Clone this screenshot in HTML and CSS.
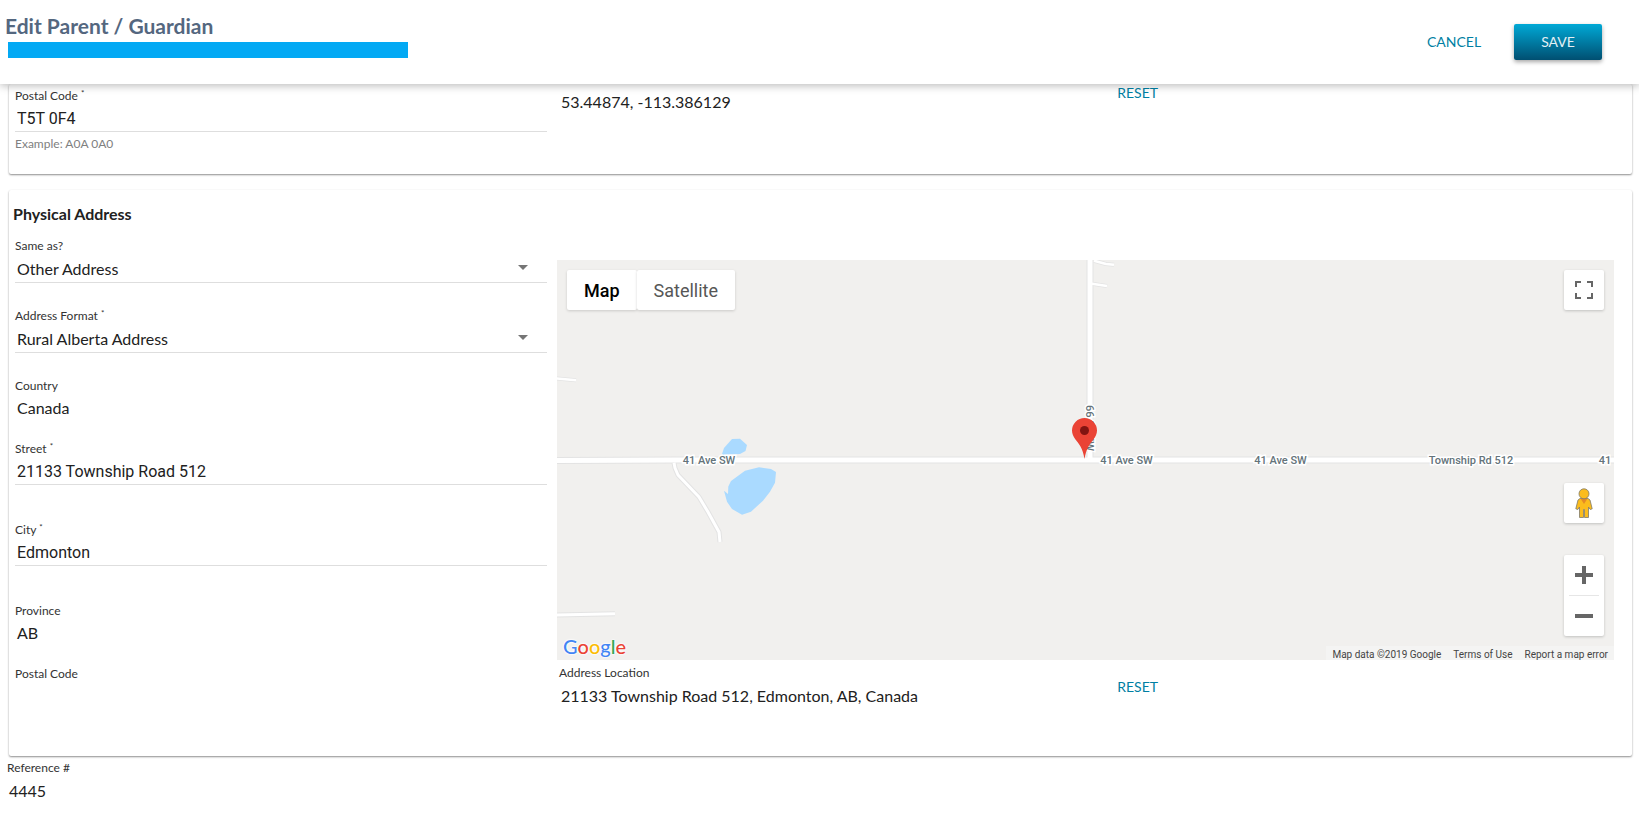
FILE: index.html
```html
<!DOCTYPE html>
<html lang="en">
<head>
<meta charset="utf-8">
<title>Edit Parent / Guardian</title>
<link rel="stylesheet" href="styles.css">
</head>
<body>
<header class="topbar">
  <div class="topbar-title">
    <h1>Edit Parent / Guardian</h1>
    <div class="name-bar"></div>
  </div>
  <div class="topbar-actions">
    <button class="btn" type="button">CANCEL</button>
    <button class="btn btn-primary" type="button">SAVE</button>
  </div>
</header>
<main>
  <section class="card card-mailing">
    <div class="columns">
      <div class="form-column">
        <div class="field">
          <label for="mail-postal">Postal Code <span class="req">*</span></label>
          <input id="mail-postal" type="text" value="T5T 0F4">
          <p class="hint">Example: A0A 0A0</p>
        </div>
      </div>
      <div class="location">
        <div class="location-text"><p class="value">53.44874, -113.386129</p></div>
        <button class="btn-link" type="button">RESET</button>
      </div>
    </div>
  </section>

  <section class="card card-physical">
    <h2>Physical Address</h2>
    <div class="columns">
      <div class="form-column">
        <div class="field field-select">
          <label for="same-as">Same as?</label>
          <div class="select">
            <select id="same-as"><option>Other Address</option></select>
            <svg class="caret" viewBox="0 0 10 5"><path d="M0 0h10L5 5z"/></svg>
          </div>
        </div>
        <div class="field field-select">
          <label for="format">Address Format <span class="req">*</span></label>
          <div class="select">
            <select id="format"><option>Rural Alberta Address</option></select>
            <svg class="caret" viewBox="0 0 10 5"><path d="M0 0h10L5 5z"/></svg>
          </div>
        </div>
        <div class="field field-static">
          <span class="label">Country</span>
          <p class="value">Canada</p>
        </div>
        <div class="field field-input">
          <label for="street">Street <span class="req">*</span></label>
          <input id="street" type="text" value="21133 Township Road 512">
        </div>
        <div class="field field-input">
          <label for="city">City <span class="req">*</span></label>
          <input id="city" type="text" value="Edmonton">
        </div>
        <div class="field field-static">
          <span class="label">Province</span>
          <p class="value">AB</p>
        </div>
        <div class="field field-static">
          <span class="label">Postal Code</span>
        </div>
      </div>

      <div class="map-column">
        <div class="map">
          <svg class="map-canvas" viewBox="0 0 1057 400" preserveAspectRatio="xMidYMid slice">
            <g class="road-edge">
              <path stroke-width="4" d="M-5 118l24 2.300M537 .7L549 4l8 .7M535 23.700l15 2.300"/>
              <path stroke-width="5" d="M-5 355l63-1.300M117 202.700l1 5.300 3 7 21 22 9 15 11 20 1 10"/>
              <path stroke-width="7" d="M-5 200.500L120 200h942M533 -5v203"/>
            </g>
            <g class="road">
              <path stroke-width="2.500" d="M-5 118l24 2.300M537 .7L549 4l8 .7M535 23.700l15 2.300"/>
              <path stroke-width="3" d="M-5 355l63-1.300M117 202.700l1 5.300 3 7 21 22 9 15 11 20 1 10"/>
              <path stroke-width="5" d="M-5 200.500L120 200h942M533 -5v203"/>
            </g>
            <path class="water" d="M165 194l2-6 8-9 8-.3 7 6.300-1.500 6L183 194l-17 1zM167 230.700l4 3.300 .3-7.500 2.700-5.500 14-10.300 14-3.400 12 1.700 5 3-1 10.700-5 9-7 9-12 11-9 3-10-5.700-5-7.300z"/>
            <g class="road-name">
              <text x="152" y="204">41 Ave SW</text>
              <text x="569.500" y="204">41 Ave SW</text>
              <text x="723.500" y="204">41 Ave SW</text>
              <text x="914" y="204">Township Rd 512</text>
              <text x="1048" y="204">41</text>
              <text transform="translate(529 168) rotate(90)" x="0" y="0">66 St NW</text>
            </g>
            <path class="pin" d="M527.500 199c-.8-5-2-9-4-12.500-3-5.500-8.500-9.500-8.500-16a12.500 12.500 0 0 1 25 0c0 6.500-5.500 10.500-8.500 16-2 3.500-3.200 7.500-4 12.500z"/>
            <circle class="pin-dot" cx="527.500" cy="170.500" r="4.500"/>
          </svg>
          <div class="map-type">
            <button class="is-active" type="button">Map</button><button type="button">Satellite</button>
          </div>
          <button class="map-btn map-fullscreen" type="button" aria-label="Toggle fullscreen">
            <svg width="18" height="18" viewBox="0 0 18 18"><path d="M0 0h6v2H2v4H0zM12 0h6v6h-2V2h-4zM0 12h2v4h4v2H0zM16 12h2v6h-6v-2h4z"/></svg>
          </button>
          <div class="map-tools">
            <button class="map-btn" type="button" aria-label="Street View">
              <svg width="18" height="30" viewBox="0 0 18 30">
                <path fill="#fbbc1d" stroke="#7d7a6c" stroke-width=".8" d="M5 10.500h8l2 1.500 2.200 8.800-2 .7L13.500 19v10.500h-4v-8h-1v8h-4V19l-1.700 2.500-2-.7L3 12z"/>
                <path fill="#e58a26" d="M5.500 10.500h7L9 16z"/>
                <circle cx="9" cy="5.800" r="5" fill="#fbbc1d" stroke="#7d7a6c" stroke-width=".8"/>
              </svg>
            </button>
            <div class="zoom">
              <button type="button" aria-label="Zoom in"><svg width="18" height="18" viewBox="0 0 18 18"><path d="M7 0h4v7h7v4h-7v7H7v-7H0V7h7z"/></svg></button>
              <button type="button" aria-label="Zoom out"><svg width="18" height="18" viewBox="0 0 18 18"><path d="M0 7h18v4H0z"/></svg></button>
            </div>
          </div>
          <a class="logo" href="#"><span class="g-blue">G</span><span class="g-red">o</span><span class="g-yellow">o</span><span class="g-blue">g</span><span class="g-green">l</span><span class="g-red">e</span></a>
          <div class="attribution"><span>Map data ©2019 Google</span><a href="#">Terms of Use</a><a href="#">Report a map error</a></div>
        </div>
        <div class="location">
          <div class="location-text">
            <span class="label">Address Location</span>
            <p class="value">21133 Township Road 512, Edmonton, AB, Canada</p>
          </div>
          <button class="btn-link" type="button">RESET</button>
        </div>
      </div>
    </div>
  </section>

  <div class="reference">
    <span class="label">Reference #</span>
    <p class="value">4445</p>
  </div>
</main>
</body>
</html>
```
FILE: styles.css
```css
* {
  box-sizing: border-box;
}

body {
  margin: 0;
  background: #fff;
  color: #212121;
  font-family: Lato, "Liberation Sans", sans-serif;
  font-size: 16px;
  line-height: 24px;
}

h1,
h2,
p {
  margin: 0;
}

button {
  border: 0;
  padding: 0;
  background: none;
  font-family: inherit;
  cursor: pointer;
}

/* Top bar */
.topbar {
  position: relative;
  z-index: 1;
  display: flex;
  justify-content: space-between;
  height: 84px;
  background: #fff;
  box-shadow: 0 2px 8px rgba(0, 0, 0, 0.26);
}

.topbar-title {
  padding: 13px 0 0 5px;
}

h1 {
  color: #54677f;
  font-size: 21px;
  line-height: 26px;
  font-weight: 700;
}

.name-bar {
  width: 400px;
  height: 16px;
  margin: 3px 0 0 3px;
  background: #03a9f4;
}

.topbar-actions {
  display: flex;
  align-items: center;
  gap: 16px;
  padding-right: 37px;
}

.btn {
  min-width: 88px;
  height: 36px;
  border-radius: 2px;
  color: #007fa3;
  font-size: 14px;
  line-height: 36px;
}

.btn-primary {
  background: linear-gradient(#00a9d6, #004f71);
  color: #e3f0f5;
  box-shadow: 0 2px 4px rgba(0, 0, 0, 0.35);
}

.btn-link {
  align-self: start;
  color: #007fa3;
  font-size: 14px;
  line-height: 18px;
}

/* Cards */
.card {
  margin: 0 7px 16px 9px;
  border-radius: 2px;
  background: #fff;
  box-shadow: 0 1px 2px rgba(0, 0, 0, 0.45);
}

.card-mailing {
  padding-bottom: 22px;
}

.card-physical {
  margin-bottom: 4px;
  padding: 12px 0 48px;
}

h2 {
  padding-left: 4px;
  font-size: 16px;
  line-height: 24px;
  font-weight: 700;
}

.columns {
  display: grid;
  grid-template-columns: 532fr 1057fr;
  gap: 10px;
  padding: 0 18px 0 6px;
}

/* Fields */
.form-column {
  padding-top: 12px;
}

.card-mailing .form-column {
  padding-top: 4px;
}

label,
.label {
  display: block;
  color: #333;
  font-size: 12px;
  line-height: 16px;
}

.req {
  font-size: 8px;
  line-height: 8px;
  vertical-align: 4px;
}

.value {
  padding-left: 2px;
}

.field .value {
  margin-top: 2px;
}

.field input,
.field select {
  display: block;
  width: 100%;
  height: 26px;
  margin: 2px 0 0;
  padding: 0 0 0 2px;
  border: 0;
  border-bottom: 1px solid #dedede;
  border-radius: 0;
  outline: 0;
  background: none;
  color: #212121;
  font-family: Roboto, sans-serif;
  font-size: 16px;
}

.field select {
  height: 27px;
  padding-bottom: 2px;
  appearance: none;
  font-family: Lato, sans-serif;
}

.select {
  position: relative;
}

.caret {
  position: absolute;
  right: 19px;
  top: 9px;
  width: 10px;
  height: 5px;
  fill: #757575;
  pointer-events: none;
}

.field-select {
  margin-bottom: 25px;
}

.field-static {
  margin-bottom: 21px;
}

.field-input {
  margin-bottom: 37px;
}

.field-input input {
  padding-bottom: 1px;
}

.hint {
  margin-top: 4px;
  color: #808080;
  font-size: 12px;
  line-height: 16px;
}

/* Address location row */
.location {
  display: grid;
  grid-template-columns: 53fr 47fr;
}

.location-text {
  padding: 5px 0 0 2px;
}

.card-mailing .location-text {
  padding-top: 6px;
}

.location .label {
  margin-bottom: 3px;
}

.location .btn-link {
  justify-self: start;
}

.map-column .btn-link {
  margin-top: 18px;
}

/* Map */
.map-column {
  padding-top: 34px;
}

.map {
  position: relative;
  height: 400px;
  overflow: hidden;
  background: #f1f0ee;
  font-family: Roboto, sans-serif;
}

.map-canvas {
  display: block;
  width: 100%;
  height: 100%;
}

.road-edge,
.road {
  fill: none;
  stroke: #e3e3e3;
  stroke-linejoin: round;
}

.road {
  stroke: #fff;
}

.water {
  fill: #aadaff;
}

.road-name {
  fill: #64737a;
  stroke: #fff;
  stroke-width: 3px;
  paint-order: stroke;
  font-size: 11px;
  font-weight: 500;
  text-anchor: middle;
}

.pin {
  fill: #ea4335;
}

.pin-dot {
  fill: #811411;
}

.map-type {
  position: absolute;
  left: 10px;
  top: 10px;
  display: flex;
}

.map-type button {
  height: 40px;
  padding: 0 17px;
  border-radius: 2px;
  background: #fff;
  color: #565656;
  font-size: 18px;
  box-shadow: 0 1px 3px rgba(0, 0, 0, 0.16);
}

.map-type .is-active {
  color: #000;
  font-weight: 500;
}

.map-btn,
.zoom {
  display: grid;
  place-items: center;
  width: 40px;
  border-radius: 2px;
  background: #fff;
  fill: #666;
  box-shadow: 0 1px 3px rgba(0, 0, 0, 0.2);
}

.map-btn {
  height: 40px;
}

.map-fullscreen {
  position: absolute;
  right: 10px;
  top: 10px;
}

.map-tools {
  position: absolute;
  right: 10px;
  bottom: 24px;
  display: grid;
  gap: 32px;
}

.zoom button {
  display: grid;
  place-items: center;
  width: 30px;
  height: 40px;
}

.zoom button:first-child {
  height: 41px;
  border-bottom: 1px solid #e6e6e6;
}

.logo {
  position: absolute;
  left: 6px;
  bottom: 0;
  font-family: Lato, sans-serif;
  font-size: 20px;
  font-weight: 500;
  line-height: 28px;
  text-decoration: none;
  text-shadow: 0 0 2px #fff, 0 0 2px #fff, 0 0 3px #fff;
}

.g-blue {
  color: #4285f4;
}

.g-red {
  color: #ea4335;
}

.g-yellow {
  color: #fbbc05;
}

.g-green {
  color: #34a853;
}

.attribution {
  position: absolute;
  right: 0;
  bottom: 0;
  display: flex;
  height: 14px;
  background: rgba(245, 245, 245, 0.7);
  color: #444;
  font-size: 10px;
}

.attribution span,
.attribution a {
  padding: 3px 6px 0;
  line-height: 12px;
  color: inherit;
  text-decoration: none;
}

/* Reference number */
.reference {
  padding-left: 7px;
}

.reference .value {
  margin-top: 3px;
}
```
